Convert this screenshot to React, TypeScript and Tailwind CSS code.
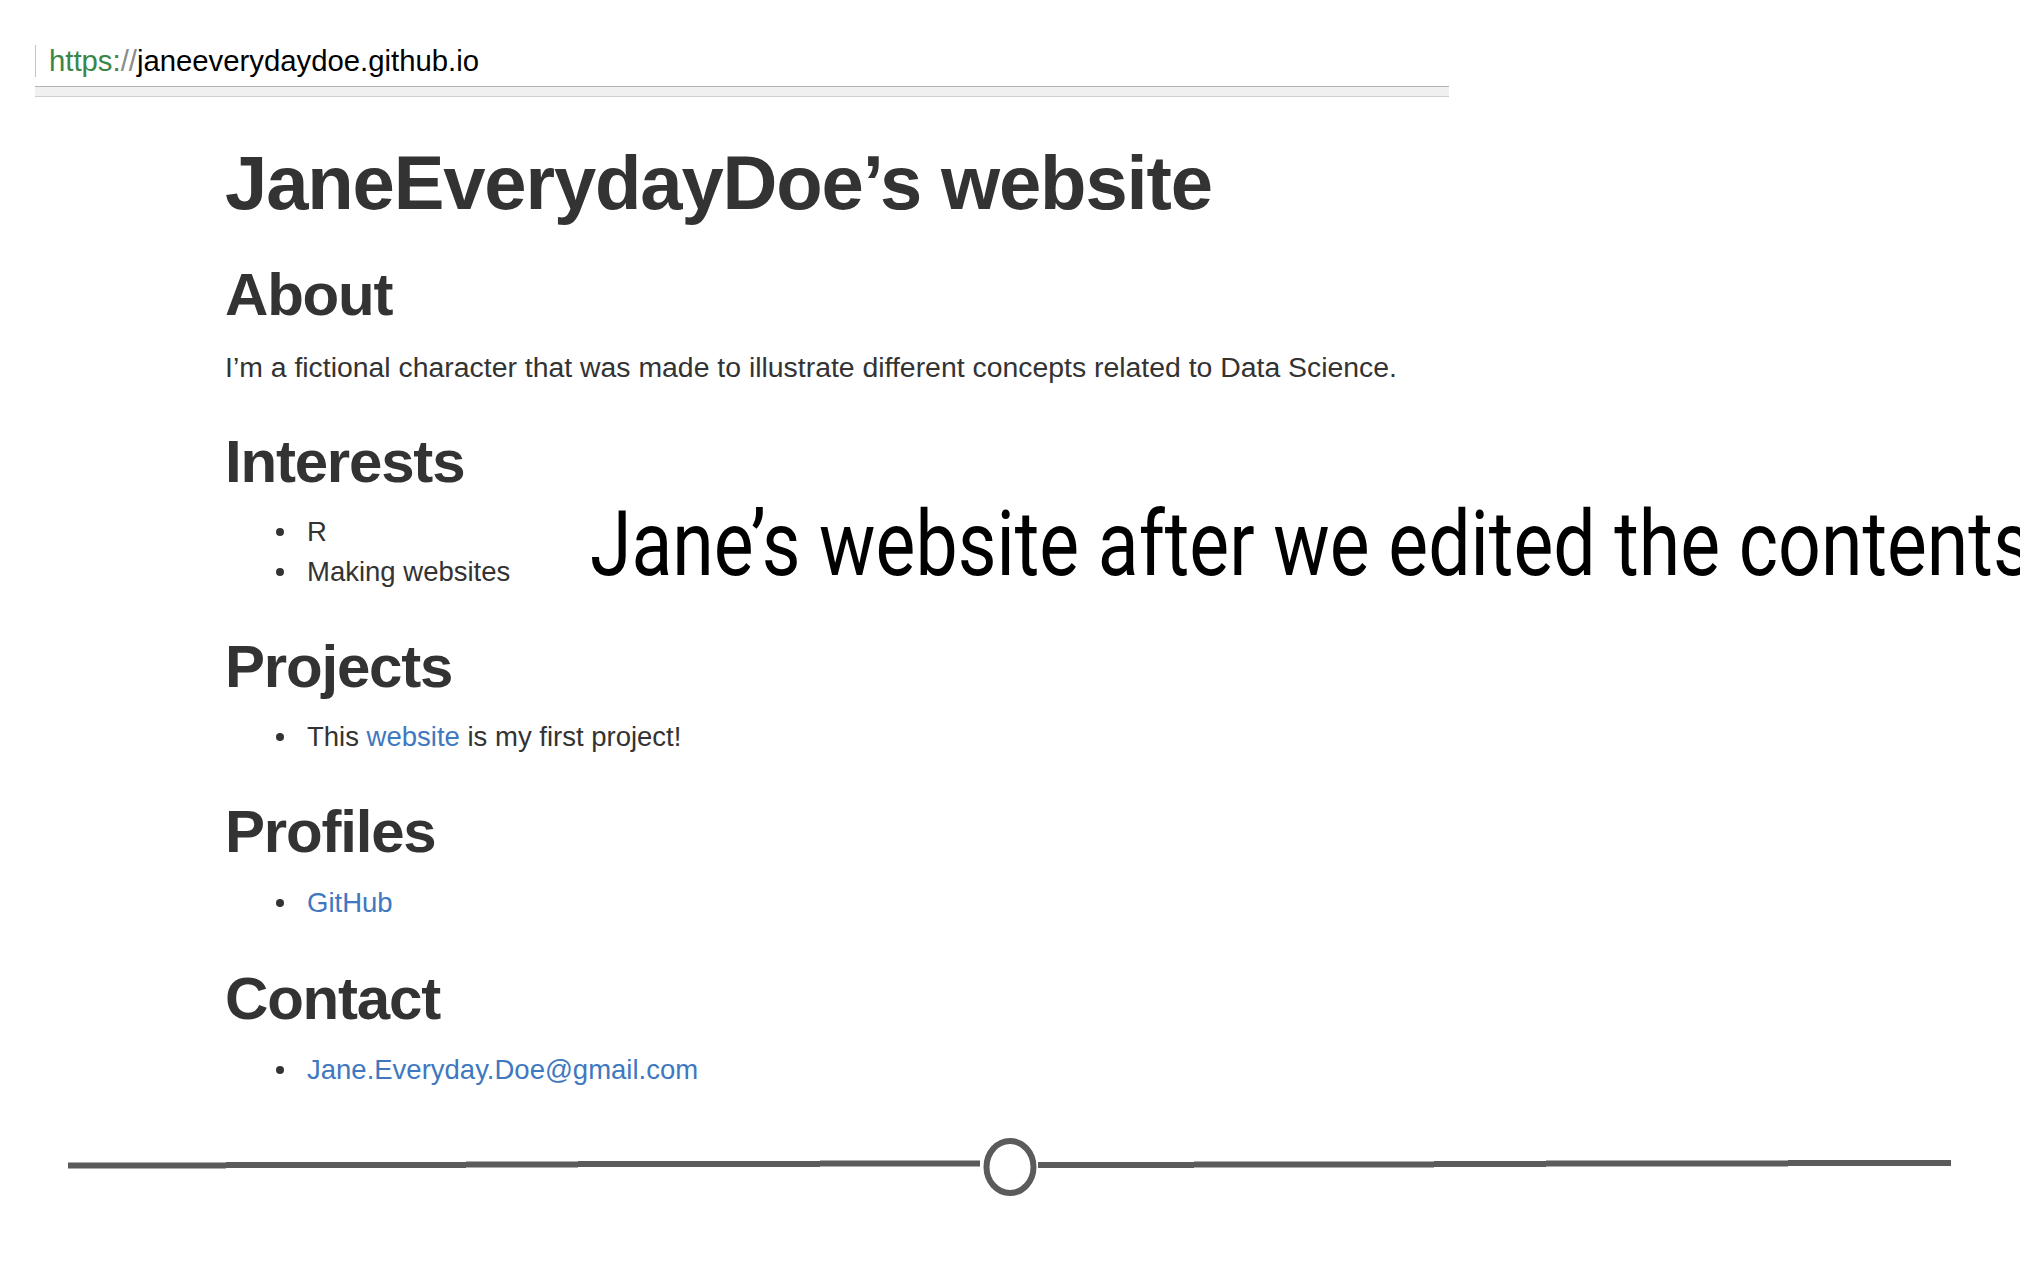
import React from 'react';

const heading = "text-[60px] leading-[72px] font-bold tracking-[-0.02em] text-[#333333]";
const link = "text-[#4078c0]";

function Bullet({ children }: { children: React.ReactNode }) {
  return (
    <li className="flex items-center h-[40px]">
      <span className="w-[37px] pl-[6px] flex">
        <span className="w-[8px] h-[8px] rounded-full bg-[#333333]" />
      </span>
      <span>{children}</span>
    </li>
  );
}

function Divider() {
  // slider-like rule with a ring in the middle
  return (
    <svg className="block mt-[40px]" width="2020" height="70" viewBox="0 0 2020 70">
      <g fill="#5b5b5b">
        <rect x="68" y="32.5" width="158" height="6" />
        <rect x="226" y="32" width="240" height="6" />
        <rect x="466" y="31.5" width="112" height="6" />
        <rect x="578" y="31" width="242" height="6" />
        <rect x="820" y="30.5" width="110" height="6" />
        <rect x="930" y="30.5" width="50" height="6" />
        <rect x="1038" y="32" width="156" height="6" />
        <rect x="1194" y="31.5" width="240" height="6" />
        <rect x="1434" y="31" width="112" height="6" />
        <rect x="1546" y="30.5" width="242" height="6" />
        <rect x="1788" y="30" width="163" height="6" />
      </g>
      <ellipse cx="1010" cy="37" rx="23.5" ry="26" fill="none" stroke="#5b5b5b" strokeWidth="6" />
    </svg>
  );
}

export default function App() {
  return (
    <div className="w-[2020px] h-[1263px] bg-white overflow-hidden font-['Liberation_Sans',Arial,sans-serif] text-[#333333]">
      {/* Address bar */}
      <div className="pt-[45px] pl-[35px]">
        <div className="flex items-center h-[32px] border-l border-[#c4c4c4] pl-[13px] text-[29.3px] leading-[32px] text-black">
          <span className="text-[#3a8548]">https:</span>
          <span className="text-[#8a8a8a]">//</span>
          <span>janeeverydaydoe.github.io</span>
        </div>
        <div className="mt-[9px] w-[1414px] h-[11px] bg-[#f0f0f0] border-t border-b border-t-[#b5b5b5] border-b-[#cfcfcf]" />
      </div>

      {/* Page */}
      <main className="pl-[225px] pt-[41px]">
        <h1 className="text-[76px] leading-[90px] font-bold tracking-[-0.015em]">JaneEverydayDoe’s website</h1>

        <h2 className={`${heading} mt-[31px]`}>About</h2>
        <p className="mt-[16px] text-[28.4px] leading-[40px]">
          I’m a fictional character that was made to illustrate different concepts related to Data Science.
        </p>

        <h2 className={`${heading} mt-[39px]`}>Interests</h2>
        <div className="flex items-start mt-[14px]">
          <ul className="shrink-0 ml-[45px] text-[27.5px] leading-[40px] w-[320px]">
            <Bullet>R</Bullet>
            <Bullet>Making websites</Bullet>
          </ul>
          <div className="shrink-0 -mt-[12px] whitespace-nowrap origin-left scale-x-[0.835] font-['Roboto',sans-serif] text-[90px] leading-[90px] text-black">
            Jane’s website after we edited the contents
          </div>
        </div>

        <h2 className={`${heading} mt-[39px]`}>Projects</h2>
        <ul className="ml-[45px] mt-[14px] text-[27.5px] leading-[40px]">
          <Bullet>
            This <span className={link}>website</span> is my first project!
          </Bullet>
        </ul>

        <h2 className={`${heading} mt-[39px]`}>Profiles</h2>
        <ul className="ml-[45px] mt-[15px] text-[27.5px] leading-[40px]">
          <Bullet>
            <span className={link}>GitHub</span>
          </Bullet>
        </ul>

        <h2 className={`${heading} mt-[40px]`}>Contact</h2>
        <ul className="ml-[45px] mt-[15px] text-[27.5px] leading-[40px]">
          <Bullet>
            <span className={link}>Jane.Everyday.Doe@gmail.com</span>
          </Bullet>
        </ul>
      </main>

      <Divider />
    </div>
  );
}
